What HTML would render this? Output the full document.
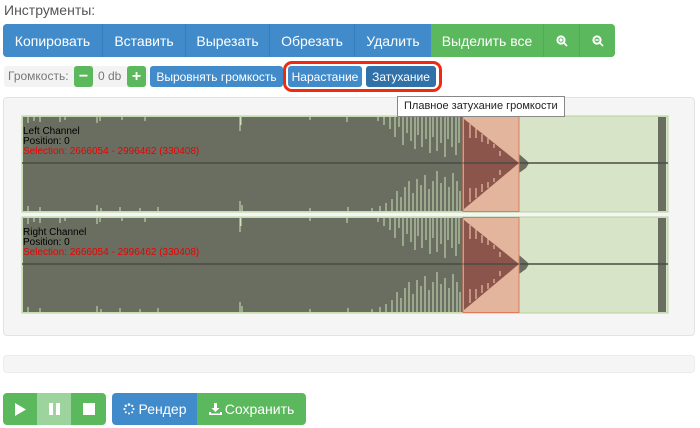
<!DOCTYPE html>
<html><head><meta charset="utf-8"><style>
*{box-sizing:border-box;margin:0;padding:0}
body{width:700px;height:428px;background:#fff;font-family:"Liberation Sans","DejaVu Sans",sans-serif;position:relative;overflow:hidden;color:#333}
.a{position:absolute}
.btn{position:absolute;color:#fff;font-size:14px;display:flex;align-items:center;justify-content:center;white-space:nowrap}
.s{position:absolute;color:#fff;font-size:12px;display:flex;align-items:center;justify-content:center;white-space:nowrap;border-radius:3px}
</style></head><body>
<div class="a" style="left:4px;top:2px;font-size:14px;color:#555">Инструменты:</div>

<div class="a" style="left:3px;top:24px;width:612px;height:33px;border-radius:4px;overflow:hidden;background:#5cb85c"></div>
<div class="btn" style="left:3px;top:24px;width:100px;height:33px;background:#428bca;border-radius:4px 0 0 4px;border-right:1px solid #357ebd">Копировать</div>
<div class="btn" style="left:103px;top:24px;width:83px;height:33px;background:#428bca;border-right:1px solid #357ebd">Вставить</div>
<div class="btn" style="left:186px;top:24px;width:84px;height:33px;background:#428bca;border-right:1px solid #357ebd">Вырезать</div>
<div class="btn" style="left:270px;top:24px;width:85px;height:33px;background:#428bca;border-right:1px solid #357ebd">Обрезать</div>
<div class="btn" style="left:355px;top:24px;width:76px;height:33px;background:#428bca">Удалить</div>
<div class="btn" style="left:431px;top:24px;width:113px;height:33px;background:#5cb85c;border-right:1px solid #4cae4c">Выделить все</div>
<div class="btn" style="left:544px;top:24px;width:36px;height:33px;background:#5cb85c;border-right:1px solid #4cae4c"><svg width="12" height="12" viewBox="0 0 12 12"><circle cx="5" cy="5" r="3.6" fill="none" stroke="#fff" stroke-width="2"/><path d="M8 8l3 3M3.3 5h3.4M5 3.3v3.4" stroke="#fff" stroke-width="1.6"/></svg></div>
<div class="btn" style="left:580px;top:24px;width:35px;height:33px;background:#5cb85c;border-radius:0 4px 4px 0"><svg width="12" height="12" viewBox="0 0 12 12"><circle cx="5" cy="5" r="3.6" fill="none" stroke="#fff" stroke-width="2"/><path d="M8 8l3 3M3.3 5h3.4" stroke="#fff" stroke-width="1.6"/></svg></div>

<div class="a" style="left:4px;top:66px;width:144px;height:21px;background:#f3f3f3;border-radius:3px"></div>
<div class="a" style="left:8px;top:69px;font-size:12px;color:#777">Громкость:</div>
<div class="s" style="left:74px;top:66px;width:19px;height:21px;background:#5cb85c;font-weight:bold;font-size:16px">−</div>
<div class="a" style="left:98px;top:69px;font-size:12px;color:#777">0 db</div>
<div class="s" style="left:127px;top:66px;width:19px;height:21px;background:#5cb85c;font-weight:bold;font-size:16px">+</div>
<div class="s" style="left:150px;top:66px;width:133px;height:21px;background:#428bca">Выровнять громкость</div>
<div class="a" style="left:283px;top:61px;width:159px;height:31px;border:3.5px solid #f02a10;border-radius:9px"></div>
<div class="s" style="left:288px;top:66px;width:74px;height:21px;background:#428bca">Нарастание</div>
<div class="s" style="left:366px;top:66px;width:70px;height:21px;background:#3071a9">Затухание</div>

<div class="a" style="left:3px;top:97px;width:692px;height:239px;background:#f5f5f5;border:1px solid #e3e3e3;border-radius:4px"></div>

<svg class="a" style="left:0;top:0" width="700" height="340">
<defs>
<g id="ch">
<rect x="22" y="0" width="646" height="96" fill="#d7e4c7" stroke="#b5d49a" stroke-width="1"/>
<rect x="23" y="1" width="440" height="94" fill="#6a6e60"/>
<rect x="463" y="1" width="56" height="94" fill="#e2b59c"/>
<polygon points="464,3 519,47 464,93" fill="#8b554b"/>
<rect x="658" y="1" width="8" height="94" fill="#6a6e60"/>
<path d="M519,38 L526,44 L529,47 L526,52 L519,57Z" fill="#6a6e60"/>
<line x1="22" y1="47" x2="668" y2="47" stroke="#4a4c44" stroke-width="1.5"/>
<g stroke="#cfe2bd" stroke-width="1">
<path d="M28 1v6M34 1v4M40 1v5M60 1v5M65 1v3M97 1v6M100 1v4M122 1v3M145 1v4M240 1v14M241 1v8M310 1v3M347 1v5M378 1v4M384 1v8M390 1v12M395 1v20M399 1v10M403 1v28M407 1v16M411 1v24M415 1v32M418 1v18M422 1v30M426 1v22M430 1v36M433 1v20M437 1v34M441 1v26M445 1v40M448 1v22M452 1v30M456 1v38M459 1v26"/>
<path d="M28 95v-5M40 95v-4M97 95v-6M101 95v-3M120 95v-4M140 95v-3M158 95v-4M240 95v-10M242 95v-6M310 95v-3M348 95v-4M372 95v-3M380 95v-5M386 95v-8M392 95v-12M397 95v-20M401 95v-14M405 95v-24M409 95v-30M413 95v-18M417 95v-32M421 95v-26M425 95v-36M429 95v-22M433 95v-30M437 95v-40M441 95v-28M445 95v-34M449 95v-24M453 95v-38M457 95v-30M460 95v-20"/>
</g>
<g stroke="#e2b59c" stroke-width="1.3">
<path d="M470 8v14M476 12v10M482 18v8M488 22v6M494 28v4M470 86v-14M476 82v-10M482 76v-8M488 72v-6M494 66v-4M500 35v5M500 59v-5"/>
</g>
<rect x="463" y="0.5" width="56" height="95" fill="none" stroke="#e07a5c" stroke-width="1"/>
</g>
</defs>
<use href="#ch" y="116"/>
<use href="#ch" y="217"/>
<g font-family="'Liberation Sans',sans-serif" font-size="10">
<text x="23" y="134" fill="#000">Left Channel</text>
<text x="23" y="144" fill="#000">Position: 0</text>
<text x="23" y="154" fill="#e00">Selection: 2666054 - 2996462 (330408)</text>
<text x="23" y="235" fill="#000">Right Channel</text>
<text x="23" y="245" fill="#000">Position: 0</text>
<text x="23" y="255" fill="#e00">Selection: 2666054 - 2996462 (330408)</text>
</g>
</svg>

<div class="a" style="left:397px;top:96px;width:168px;height:21px;background:#fff;border:1px solid #888;font-size:11px;color:#222;padding:3px 0 0 6px;white-space:nowrap;overflow:hidden">Плавное затухание громкости</div>

<div class="a" style="left:3px;top:355px;width:692px;height:18px;background:#f5f5f5;border:1px solid #ececec;border-radius:4px"></div>

<div class="btn" style="left:3px;top:393px;width:34px;height:32px;background:#5cb85c;border-radius:4px 0 0 4px"><svg width="12" height="13"><path d="M1 0L12 6.5L1 13Z" fill="#fff"/></svg></div>
<div class="btn" style="left:37px;top:393px;width:34px;height:32px;background:#9dd39d"><svg width="11" height="12"><rect x="0" y="0" width="4" height="12" fill="#fff"/><rect x="7" y="0" width="4" height="12" fill="#fff"/></svg></div>
<div class="btn" style="left:71px;top:393px;width:35px;height:32px;background:#5cb85c;border-radius:0 4px 4px 0"><svg width="12" height="12"><rect width="12" height="12" fill="#fff"/></svg></div>
<div class="btn" style="left:112px;top:393px;width:85px;height:32px;background:#428bca;border-radius:4px 0 0 4px"><svg width="12" height="12" viewBox="0 0 12 12" style="margin-right:4px"><g fill="#fff"><circle cx="6" cy="1.5" r="1.3"/><circle cx="9.2" cy="2.8" r="1.1"/><circle cx="10.5" cy="6" r="1"/><circle cx="9.2" cy="9.2" r="1"/><circle cx="6" cy="10.5" r="1"/><circle cx="2.8" cy="9.2" r="1"/><circle cx="1.5" cy="6" r="1.1"/><circle cx="2.8" cy="2.8" r="1.2"/></g></svg>Рендер</div>
<div class="btn" style="left:197px;top:393px;width:109px;height:32px;background:#5cb85c;border-radius:0 4px 4px 0"><svg width="13" height="12" viewBox="0 0 13 12" style="margin-right:3px"><path d="M5 0h3v5h2.5L6.5 9 2.5 5H5Z M0 9h2v1.5h9V9h2v3H0Z" fill="#fff"/></svg>Сохранить</div>
</body></html>
